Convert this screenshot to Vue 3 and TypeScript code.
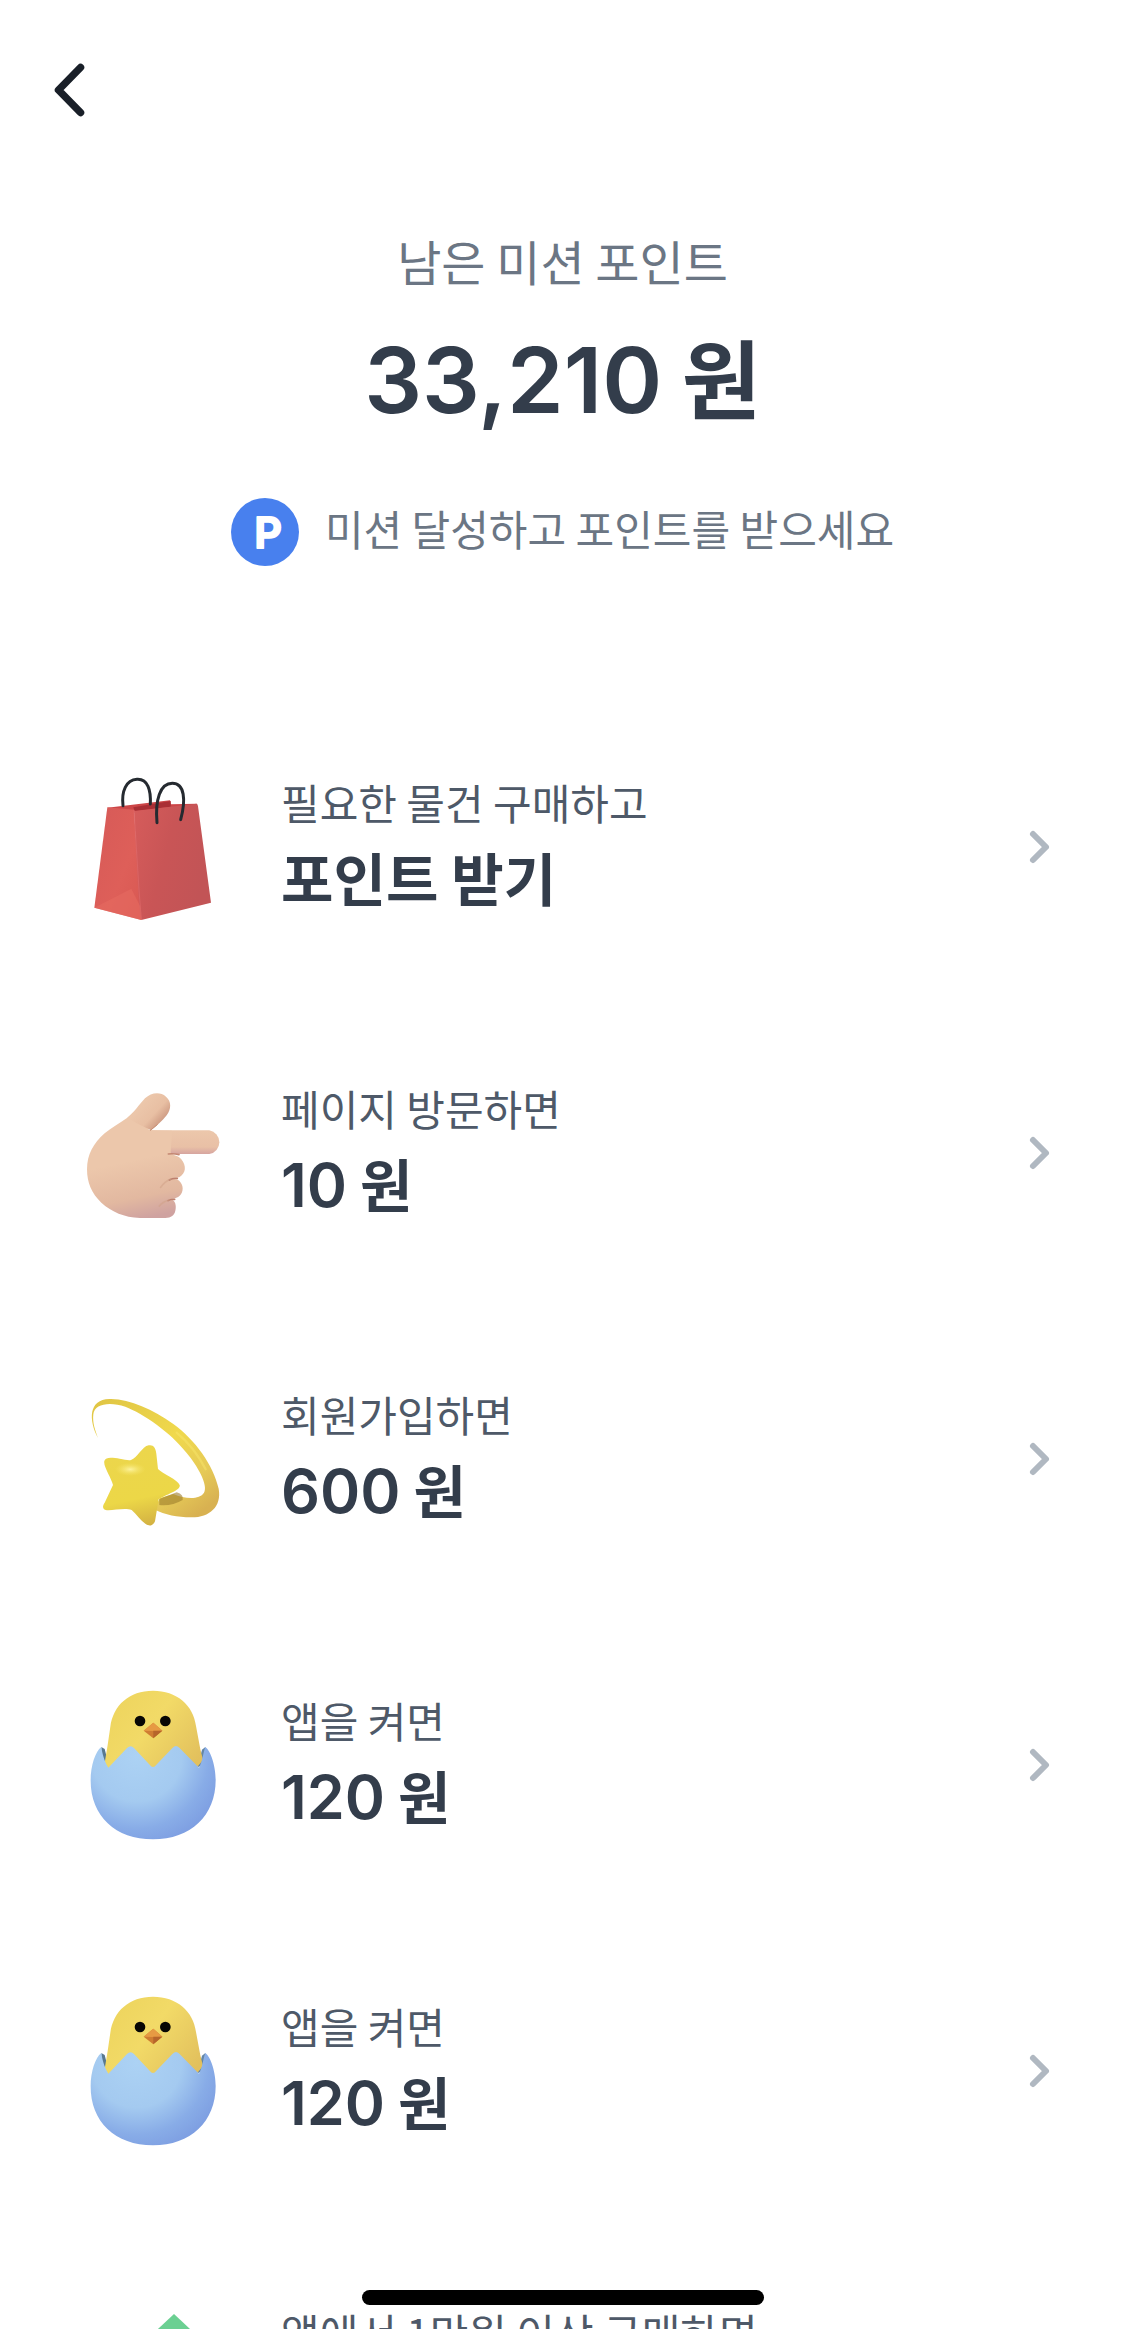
<script setup lang="ts">
type IconName = 'bag' | 'hand' | 'star' | 'chick' | 'gift'

interface Mission {
  id: number
  icon: IconName
  label: string
  amount?: string
  reward: string
}

const missions: Mission[] = [
  { id: 1, icon: 'bag', label: '필요한 물건 구매하고', reward: '포인트 받기' },
  { id: 2, icon: 'hand', label: '페이지 방문하면', amount: '10', reward: '원' },
  { id: 3, icon: 'star', label: '회원가입하면', amount: '600', reward: '원' },
  { id: 4, icon: 'chick', label: '앱을 켜면', amount: '120', reward: '원' },
  { id: 5, icon: 'chick', label: '앱을 켜면', amount: '120', reward: '원' },
  { id: 6, icon: 'gift', label: '앱에서 1만원 이상 구매하면', amount: '500', reward: '원' },
]
</script>

<template>
  <div class="screen">
    <header class="topbar">
      <button class="back" type="button" aria-label="뒤로">
        <svg width="60" height="72" viewBox="0 0 60 72" fill="none" stroke="#191f28" stroke-width="7.5" stroke-linecap="round" stroke-linejoin="round">
          <path d="M40.500 13.500 18.500 36 40.500 58.500" />
        </svg>
      </button>
    </header>

    <section class="summary">
      <h1 class="caption">남은 미션 포인트</h1>
      <p class="balance"><span class="digits">33,210</span> 원</p>
      <p class="guide">
        <svg class="coin" width="68" height="68" viewBox="0 0 68 68" aria-hidden="true">
          <circle cx="34" cy="34" r="34" fill="#4880ee" />
          <text class="coin-letter" x="37" y="50" text-anchor="middle">P</text>
        </svg>
        <span class="guide-text">미션 달성하고 포인트를 받으세요</span>
      </p>
    </section>

    <ul class="missions">
      <li v-for="m in missions" :key="m.id">
        <a class="mission" href="#">
          <svg v-if="m.icon === 'bag'" class="icon" viewBox="0 -9 510 540" aria-hidden="true">
            <defs>
              <linearGradient id="bagSide" x1="0" y1="0" x2="1" y2="1">
                <stop offset="0" stop-color="#d65a58" />
                <stop offset="0.6" stop-color="#de5f59" />
                <stop offset="1" stop-color="#d85852" />
              </linearGradient>
              <linearGradient id="bagFront" x1="0" y1="0" x2="1" y2="0.4">
                <stop offset="0" stop-color="#d65c5b" />
                <stop offset="0.5" stop-color="#c95556" />
                <stop offset="1" stop-color="#c25456" />
              </linearGradient>
            </defs>
            <path d="M112 143 300 121 303 133 380 131 380 150 192 158Z" fill="#cc4547" />
            <path d="M190 142 302 123 302 140 194 154Z" fill="#a92f35" />
            <path d="M159 137C154 94 168 60 201 58S243 92 241 132" fill="none" stroke="#252a30" stroke-width="9" stroke-linecap="round" />
            <path d="M112 142 192 149 214 480 73 443Z" fill="url(#bagSide)" />
            <path d="M192 153 380 131Q383 132 384 139L423 428 214 480Q208 460 205 400Z" fill="url(#bagFront)" />
            <path d="M73 443 184 386 210 438 214 480Z" fill="#e66a60" opacity=".6" />
            <path d="M192 150 207 390 214 478" fill="none" stroke="#e0696a" stroke-width="3" opacity=".7" />
            <path d="M261 188C255 120 270 70 307 70S348 120 332 179" fill="none" stroke="#252a30" stroke-width="9" stroke-linecap="round" />
          </svg>

          <svg v-else-if="m.icon === 'hand'" class="icon" viewBox="0 -51 510 540" aria-hidden="true">
            <defs>
              <linearGradient id="skin" x1="0.4" y1="0" x2="0.6" y2="1">
                <stop offset="0" stop-color="#ecc7ab" />
                <stop offset="0.45" stop-color="#ecc7ab" />
                <stop offset="0.8" stop-color="#e2b8a0" />
                <stop offset="1" stop-color="#cfa2a0" />
              </linearGradient>
              <linearGradient id="finger" x1="0" y1="0" x2="0" y2="1">
                <stop offset="0" stop-color="#ecc7ab" />
                <stop offset="0.7" stop-color="#e9c0a6" />
                <stop offset="1" stop-color="#d6a5a0" />
              </linearGradient>
              <linearGradient id="thumb" gradientUnits="userSpaceOnUse" x1="215" y1="70" x2="275" y2="125">
                <stop offset="0" stop-color="#ecc7ab" />
                <stop offset="0.6" stop-color="#e8bfa3" />
                <stop offset="1" stop-color="#cf9c84" />
              </linearGradient>
            </defs>
            <path d="M220 151H418A36 36 0 0 1 418 222H220Z" fill="url(#finger)" />
            <path d="M172 113C197 95 190 90 211 108 232 128 226 151 245 151L306 152 302 217C308 229 323 224 334 238 350 258 348 279 328 292L307 295C320 294 338 306 338 325 338 344 325 355 306 357 315 363 320 376 316 392 313 406 304 413 286 414H210C161 411 127 397 94 368 65 341 51 308 51 268 51 224 70 190 104 160 125 142 148 130 172 113Z" fill="url(#skin)" />
            <path d="M225 55C243 38 270 34 288 50 305 64 304 87 290 106 276 125 260 137 243 151L200 130 172 113C192 98 207 74 225 55Z" fill="url(#thumb)" />
            <g fill="none" stroke-linecap="round">
              <path d="M241 151 262 134" stroke="#c88f74" stroke-width="3" />
              <path d="M295 222Q310 220 327 224" stroke="#c48873" stroke-width="5" />
              <path d="M298 300Q307 294 322 295" stroke="#bd806e" stroke-width="5" />
              <path d="M294 362Q302 357 314 358" stroke="#bd806e" stroke-width="5" />
              <path d="M272 322Q283 305 303 297M268 378Q277 366 297 360" stroke="#cf9f86" stroke-width="5" opacity=".5" />
            </g>
          </svg>

          <svg v-else-if="m.icon === 'star'" class="icon" viewBox="0 -33 510 540" aria-hidden="true">
            <defs>
              <linearGradient id="tail" x1="0" y1="0" x2="0.8" y2="1">
                <stop offset="0" stop-color="#dfc444" />
                <stop offset="0.5" stop-color="#f0d94c" />
                <stop offset="0.8" stop-color="#e6ca57" />
                <stop offset="1" stop-color="#d8b151" />
              </linearGradient>
              <linearGradient id="starBody" x1="0.4" y1="0" x2="0.6" y2="1">
                <stop offset="0" stop-color="#ecd64c" />
                <stop offset="0.65" stop-color="#ecd747" />
                <stop offset="1" stop-color="#d3b143" />
              </linearGradient>
              <radialGradient id="starShine">
                <stop offset="0" stop-color="#fff6a6" stop-opacity=".9" />
                <stop offset="1" stop-color="#f6e568" stop-opacity="0" />
              </radialGradient>
            </defs>
            <path d="M84 174C55 120 56 58 118 57 177 55 247 88 310 132 375 179 430 255 446 326 456 381 417 413 363 412 322 412 286 405 252 388L270 354 310 342C345 357 388 360 402 338 416 316 382 257 350 219 302 157 220 101 166 80 119 64 73 71 70 103 67 128 75 150 84 174Z" fill="url(#tail)" />
            <path d="M268 357 320 337Q342 344 338 360 305 379 268 375Z" fill="#9d7d2c" opacity=".6" />
            <path d="M320 158C356 188 385 225 407 268" fill="none" stroke="#f8e669" stroke-width="7" stroke-linecap="round" opacity=".5" />
            <path d="M183 240C202 235 216 199 236 196 250 193 257 204 259 221L264 267C277 281 324 299 329 315 333 331 290 342 266 358L255 424C250 438 237 440 226 431 211 420 200 404 185 390 164 382 126 393 107 390 97 386 97 378 104 368L129 315C125 295 99 259 103 243 107 229 130 234 149 236 164 238 174 242 183 240Z" fill="url(#starBody)" />
            <ellipse cx="181" cy="268" rx="46" ry="20" fill="url(#starShine)" />
          </svg>

          <svg v-else-if="m.icon === 'chick'" class="icon" viewBox="0 15 510 540" aria-hidden="true">
            <defs>
              <linearGradient id="chickBody" x1="0" y1="0" x2="1" y2="0.7">
                <stop offset="0" stop-color="#ecd35b" />
                <stop offset="0.5" stop-color="#f2da67" />
                <stop offset="1" stop-color="#e2c05d" />
              </linearGradient>
              <radialGradient id="shell" gradientUnits="userSpaceOnUse" cx="200" cy="260" r="270">
                <stop offset="0" stop-color="#acd2f4" />
                <stop offset="0.5" stop-color="#a4caf0" />
                <stop offset="0.8" stop-color="#88ace7" />
                <stop offset="1" stop-color="#7e9fe2" />
              </radialGradient>
            </defs>
            <path d="M94 231 104 237 118 292 92 280Z" fill="#58788f" />
            <path d="M406 231 396 239 382 292 414 280Z" fill="#6486a6" />
            <path d="M249 62C320 62 370 105 378 168L391 238 399 270 350 330H150L103 285 113 225 121 170C130 105 178 62 249 62Z" fill="url(#chickBody)" />
            <path d="M94 231C97 250 102 272 115 293L171 234Q182 224 192 234L239 284Q249 298 259 284L308 233Q318 223 328 233L387 293C397 276 400 246 406 231 423 243 437 290 437 330 437 437 362 508 249 508S61 437 62 330C62 288 76 244 94 231Z" fill="url(#shell)" />
            <circle cx="210" cy="153" r="16" fill="#080704" />
            <circle cx="286" cy="153" r="16" fill="#080704" />
            <path d="M250 158 277 182 250 205 221 182Z" fill="#cf7d32" />
            <path d="M250 158 277 182 250 183 221 182Z" fill="#e69a43" />
            <path d="M250 182 277 182 250 205Z" fill="#b6652b" />
          </svg>

          <svg v-else class="icon" viewBox="0 0 170 180" aria-hidden="true">
            <path d="M104 27 150 70 104 112 58 70Z" fill="#6bd092" />
            <path d="M58 70 104 112V158L58 116Z" fill="#54bd7d" />
            <path d="M150 70 104 112V158L150 116Z" fill="#46ac6f" />
          </svg>

          <span class="texts">
            <span class="label">{{ m.label }}</span>
            <strong class="reward"><template v-if="m.amount"><span class="digits">{{ m.amount }}</span>&nbsp;</template>{{ m.reward }}</strong>
          </span>

          <svg class="chevron" width="36" height="48" viewBox="0 0 36 48" fill="none" stroke="#b0b8c1" stroke-width="6" stroke-linecap="round" stroke-linejoin="round" aria-hidden="true">
            <path d="M10 11 23 24 10 37" />
          </svg>
        </a>
      </li>
    </ul>

    <div class="home-indicator"></div>
  </div>
</template>

<style>
body {
  background: #fff;
}
</style>

<style scoped>
.screen {
  position: relative;
  height: 100vh;
  overflow: hidden;
  background: #fff;
  color: #333d4b;
  font-family: "Noto Sans CJK KR", sans-serif;
}

.topbar {
  display: flex;
  align-items: center;
  height: 180px;
  padding-left: 40px;
}

.back {
  display: flex;
  padding: 0;
  border: 0;
  background: none;
}

.summary {
  display: flex;
  flex-direction: column;
  align-items: center;
  height: 514px;
  padding-top: 44px;
  box-sizing: border-box;
}

.caption,
.balance,
.guide {
  margin: 0;
}

.caption {
  font-size: 48px;
  font-weight: 400;
  line-height: 72px;
  color: #6b7684;
}

.digits {
  font-family: Inter, sans-serif;
  line-height: 1;
}

.balance {
  margin-top: 24px;
  font-size: 86px;
  font-weight: 600;
  line-height: 112px;
}

.balance .digits {
  font-size: 91px;
}

.guide {
  display: flex;
  align-items: center;
  gap: 26px;
  margin-top: 66px;
  font-size: 42px;
  line-height: 60px;
  color: #6b7684;
}

.guide-text {
  padding-bottom: 8px;
}

.coin {
  flex: none;
}

.coin-letter {
  fill: #fff;
  stroke: #fff;
  stroke-width: 2px;
  stroke-linejoin: round;
  font-family: Inter, sans-serif;
  font-size: 43px;
  font-weight: 600;
}

.missions {
  margin: 0;
  padding: 0;
  list-style: none;
}

.mission {
  display: flex;
  align-items: center;
  height: 306px;
  padding: 0 66px 0 70px;
  color: inherit;
  text-decoration: none;
}

.icon {
  flex: none;
  width: 170px;
  height: 180px;
}

.texts {
  display: flex;
  flex: 1;
  flex-direction: column;
  gap: 4px;
  margin-left: 41px;
}

.label {
  font-size: 42px;
  line-height: 54px;
  color: #4e5968;
}

.reward {
  font-size: 57px;
  font-weight: 600;
  line-height: 86px;
}

.reward .digits {
  font-size: 61px;
}

.chevron {
  flex: none;
}

.home-indicator {
  position: absolute;
  bottom: 24px;
  left: 50%;
  width: 402px;
  height: 15px;
  border-radius: 8px;
  background: #000;
  transform: translateX(-50%);
}
</style>
